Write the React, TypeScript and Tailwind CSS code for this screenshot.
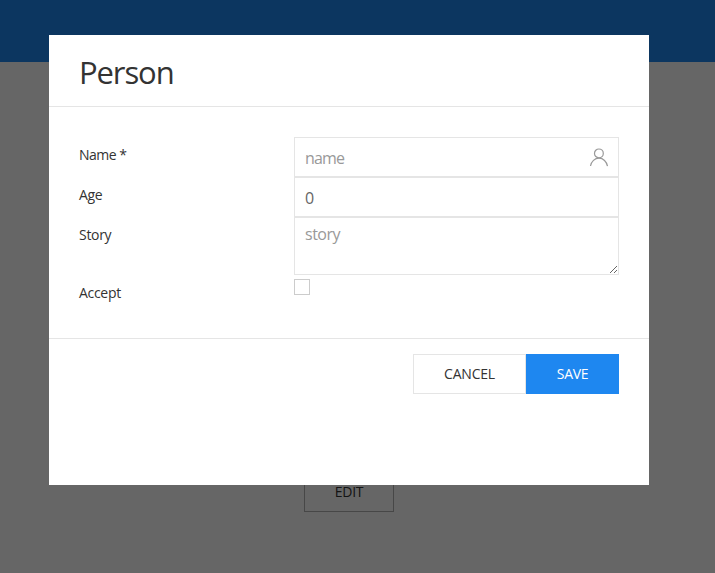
import React from "react";

function UserIcon() {
  return (
    <svg width="20" height="20" viewBox="0 0 20 20" fill="none" stroke="#999" strokeWidth="1.2">
      <circle cx="9.9" cy="6.4" r="4.4" />
      <path d="M1.5,19 C2.3,14.5 5.8,11.2 10,11.2 C14.2,11.2 17.7,14.6 18.5,19.2" />
    </svg>
  );
}

function Label({ children, height }: { children: React.ReactNode; height: string }) {
  return (
    <label className={`${height} w-[215px] shrink-0 pt-[8px] text-[14px] leading-[20px] tracking-[-0.3px] text-[#333]`}>
      {children}
    </label>
  );
}

const field =
  "block w-full border border-[#e5e5e5] bg-white px-[10px] text-[16px] text-[#666] placeholder:text-[#999] outline-none";

export default function App() {
  return (
    <div className="relative h-[573px] w-[715px] overflow-hidden bg-white font-['Open_Sans','Noto_Sans',sans-serif] text-[#333]">
      <header className="h-[62px] bg-[#1e87f0]" />
      <main className="flex justify-center pr-[17px] pt-[410px]">
        <button className="h-[40px] w-[90px] border border-[#b2b2b2] text-[14px] font-[380] leading-[38px] tracking-[-0.3px]">EDIT</button>
      </main>

      <div className="absolute inset-0 flex items-start bg-black/60 pl-[49px] pt-[35px]">
        <section className="h-[450px] w-[600px] bg-white">
          <div className="h-[72px] border-b border-[#e5e5e5] px-[30px] pt-[16px]">
            <h2 className="text-[31px] font-[370] leading-[42px] tracking-[-1.1px]">Person</h2>
          </div>
          <div className="h-[231px] px-[30px] pt-[30px]">
            <div className="flex">
              <Label height="h-[40px]"><span className="tracking-[-0.5px]">Name *</span></Label>
              <div className="relative flex-1">
                <input className={`${field} h-[40px] pt-[2px] tracking-[-0.8px]`} placeholder="name" />
                <span className="absolute right-[10px] top-[10px]">
                  <UserIcon />
                </span>
              </div>
            </div>
            <div className="flex">
              <Label height="h-[40px]">Age</Label>
              <div className="flex-1">
                <input className={`${field} h-[40px] pt-[2px]`} defaultValue="0" />
              </div>
            </div>
            <div className="flex">
              <Label height="h-[58px]">Story</Label>
              <div className="flex-1">
                <textarea className={`${field} h-[58px] resize overflow-auto pt-[4px] leading-[24px] tracking-[-0.5px]`} placeholder="story" />
              </div>
            </div>
            <div className="flex">
              <Label height="h-[40px]">Accept</Label>
              <div className="pt-[4px]">
                <input type="checkbox" className="block h-[16px] w-[16px] appearance-none border border-[#ccc] bg-white" />
              </div>
            </div>
          </div>
          <footer className="flex justify-end border-t border-[#e5e5e5] px-[30px] pt-[15px]">
            <button className="h-[40px] w-[113px] border border-[#e5e5e5] text-[14px] font-[380] leading-[38px] tracking-[-0.2px]">CANCEL</button>
            <button className="h-[40px] w-[93px] bg-[#1e87f0] text-[14px] leading-[40px] tracking-[-0.3px] text-white">SAVE</button>
          </footer>
        </section>
      </div>
    </div>
  );
}
